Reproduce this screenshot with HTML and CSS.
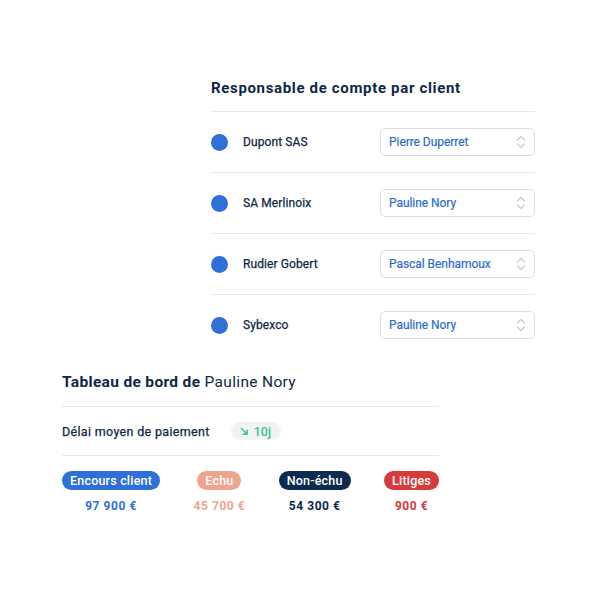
FILE: index.html
```html
<!DOCTYPE html>
<html lang="fr">
<head>
<meta charset="utf-8">
<link rel="stylesheet" href="styles.css">
</head>
<body>
<div class="page">
  <section class="assign">
    <h2 class="assign-title">Responsable de compte par client</h2>
    <div class="row">
      <span class="dot"></span>
      <span class="client">Dupont SAS</span>
      <div class="select"><span>Pierre Duperret</span><svg class="chev" viewBox="0 0 10 14" width="10" height="14"><path d="M1.5 5 L5 1.5 L8.5 5 M1.5 9 L5 12.5 L8.5 9" fill="none" stroke="#c9ccd1" stroke-width="1.3" stroke-linecap="round" stroke-linejoin="round"/></svg></div>
    </div>
    <div class="row">
      <span class="dot"></span>
      <span class="client">SA Merlinoix</span>
      <div class="select"><span>Pauline Nory</span><svg class="chev" viewBox="0 0 10 14" width="10" height="14"><path d="M1.5 5 L5 1.5 L8.5 5 M1.5 9 L5 12.5 L8.5 9" fill="none" stroke="#c9ccd1" stroke-width="1.3" stroke-linecap="round" stroke-linejoin="round"/></svg></div>
    </div>
    <div class="row">
      <span class="dot"></span>
      <span class="client">Rudier Gobert</span>
      <div class="select"><span>Pascal Benhamoux</span><svg class="chev" viewBox="0 0 10 14" width="10" height="14"><path d="M1.5 5 L5 1.5 L8.5 5 M1.5 9 L5 12.5 L8.5 9" fill="none" stroke="#c9ccd1" stroke-width="1.3" stroke-linecap="round" stroke-linejoin="round"/></svg></div>
    </div>
    <div class="row">
      <span class="dot"></span>
      <span class="client">Sybexco</span>
      <div class="select"><span>Pauline Nory</span><svg class="chev" viewBox="0 0 10 14" width="10" height="14"><path d="M1.5 5 L5 1.5 L8.5 5 M1.5 9 L5 12.5 L8.5 9" fill="none" stroke="#c9ccd1" stroke-width="1.3" stroke-linecap="round" stroke-linejoin="round"/></svg></div>
    </div>
  </section>

  <section class="dash">
    <h2 class="dash-title"><strong>Tableau de bord de</strong> Pauline Nory</h2>
    <div class="delay">
      <span class="delay-label">Délai moyen de paiement</span>
      <span class="chip"><svg viewBox="0 0 10 10" width="9" height="9"><path d="M1.5 1.5 L8 8 M8 3.5 L8 8 L3.5 8" fill="none" stroke="#36c48a" stroke-width="1.6" stroke-linecap="round" stroke-linejoin="round"/></svg>10j</span>
    </div>
    <div class="stats">
      <div class="stat"><span class="badge b-blue">Encours client</span><span class="val v-blue">97 900 €</span></div>
      <div class="stat"><span class="badge b-salmon">Echu</span><span class="val v-salmon">45 700 €</span></div>
      <div class="stat"><span class="badge b-navy">Non-échu</span><span class="val v-navy">54 300 €</span></div>
      <div class="stat"><span class="badge b-red">Litiges</span><span class="val v-red">900 €</span></div>
    </div>
  </section>
</div>
</body>
</html>
```

FILE: styles.css
```css
* { box-sizing: border-box; }
html, body { margin: 0; padding: 0; background: #ffffff; }
body {
  font-family: Roboto, "Liberation Sans", Arial, sans-serif;
  color: #0f2747;
  width: 600px;
  height: 600px;
}
.page {
  display: flex;
  flex-direction: column;
  padding-top: 78px;
}
.assign {
  margin-left: 211px;
  width: 324px;
}
.assign-title {
  margin: 0 0 13px 0;
  font-size: 15px;
  line-height: 20px;
  font-weight: 700;
  letter-spacing: 0.66px;
  color: #0f2747;
}
.row {
  display: flex;
  align-items: center;
  height: 61px;
  border-top: 1px solid #e8e9eb;
}
.dot {
  width: 17px;
  height: 17px;
  border-radius: 50%;
  background: #2f6fd8;
  flex: none;
}
.client {
  margin-left: 15px;
  font-size: 12px;
  font-weight: 400;
  letter-spacing: 0.1px;
  color: #0f2747;
  flex: 1;
  -webkit-text-stroke: 0.25px #0f2747;
}
.select {
  width: 155px;
  height: 28px;
  border: 1px solid #dcdee2;
  border-radius: 5px;
  display: flex;
  align-items: center;
  justify-content: space-between;
  padding: 0 8px 0 8px;
  font-size: 12px;
  font-weight: 400;
  letter-spacing: -0.05px;
  color: #2e6cc9;
  -webkit-text-stroke: 0.2px #2e6cc9;
}
.chev { flex: none; }

.dash {
  margin-left: 62px;
  width: 377px;
  margin-top: 17px;
}
.dash-title {
  margin: 0 0 14px 0;
  font-size: 15.5px;
  line-height: 20px;
  font-weight: 400;
  letter-spacing: 0.33px;
  color: #0f2747;
}
.dash-title strong { font-weight: 700; }
.delay {
  display: flex;
  align-items: center;
  height: 50px;
  border-top: 1px solid #e8e9eb;
  border-bottom: 1px solid #e8e9eb;
}
.delay-label {
  font-size: 12.5px;
  font-weight: 400;
  letter-spacing: 0.33px;
  color: #0f2747;
  -webkit-text-stroke: 0.25px #0f2747;
}
.chip {
  margin-left: 21px;
  display: inline-flex;
  align-items: center;
  gap: 5px;
  height: 18px;
  padding: 0 10px 0 9px;
  border-radius: 9px;
  background: #f1f2f3;
  color: #36c48a;
  font-size: 12.5px;
  font-weight: 500;
}
.stats {
  display: flex;
  justify-content: space-between;
  margin-top: 15px;
}
.stat {
  display: flex;
  flex-direction: column;
  align-items: center;
  gap: 8px;
}
.badge {
  height: 19px;
  line-height: 19px;
  padding: 0 8px;
  border-radius: 10px;
  color: #ffffff;
  font-size: 12.5px;
  font-weight: 500;
  letter-spacing: 0.2px;
}
.b-blue { background: #2f6fd8; }
.b-salmon { background: #f0a48e; }
.b-navy { background: #0d2a4f; }
.b-red { background: #d63a3c; }
.val {
  font-size: 12px;
  line-height: 16px;
  font-weight: 700;
  letter-spacing: 0.55px;
}
.v-blue { color: #2f6fd8; }
.v-salmon { color: #f0a48e; }
.v-navy { color: #0d2a4f; }
.v-red { color: #d63a3c; }
```
